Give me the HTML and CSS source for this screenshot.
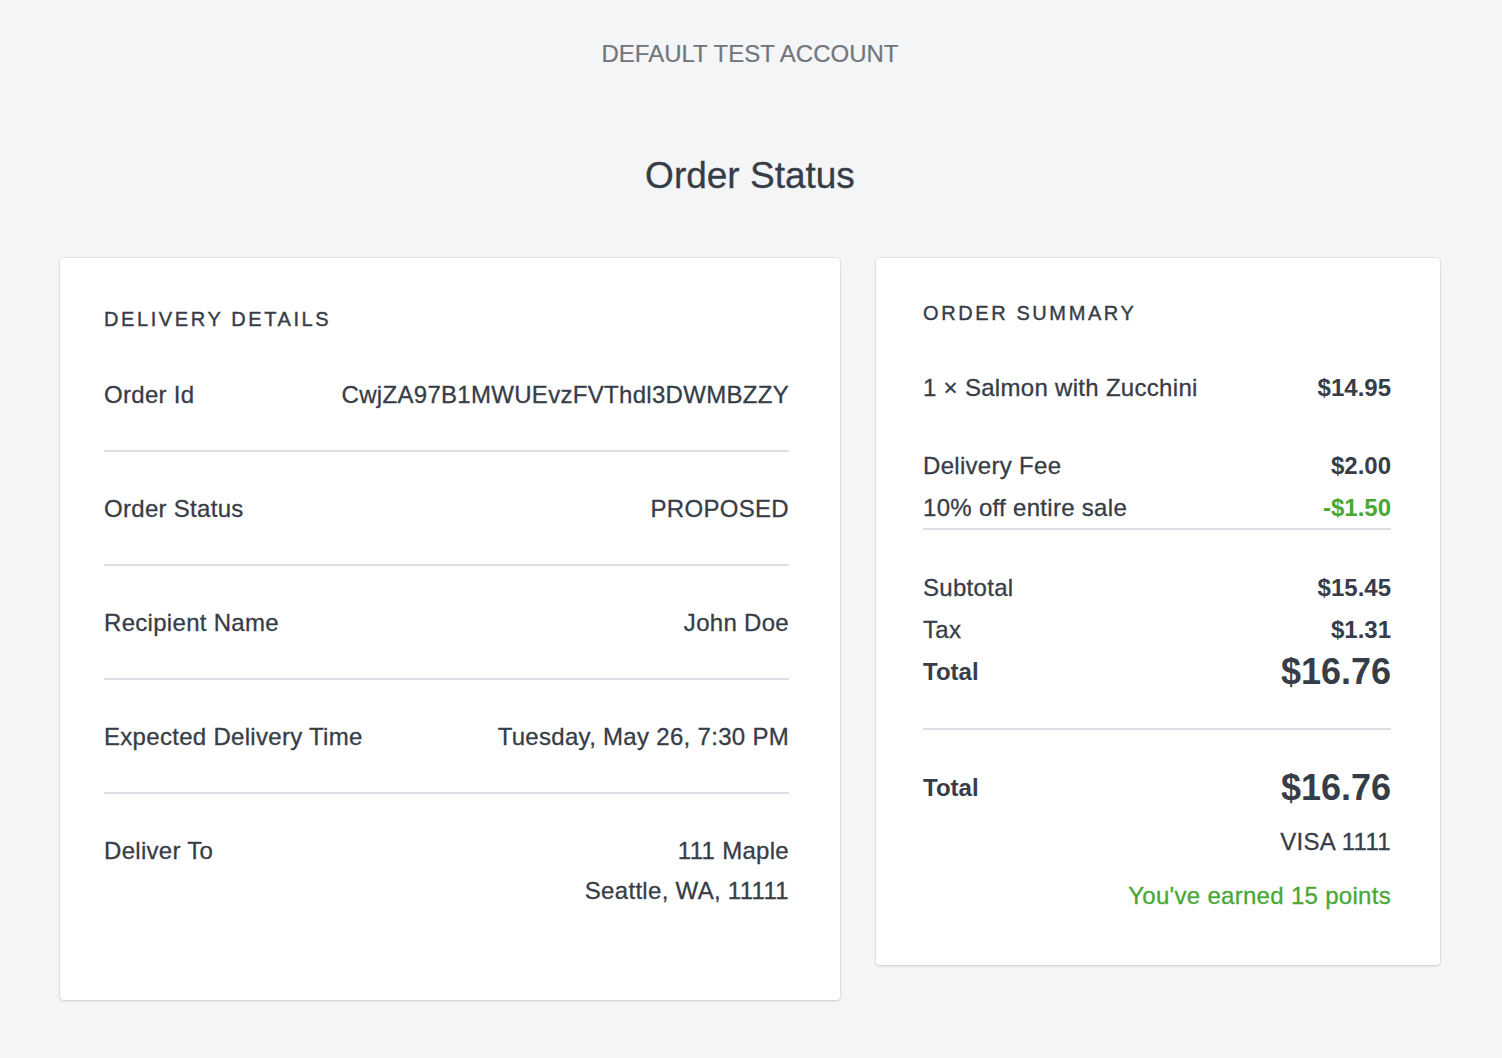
FILE: index.html
```html
<!DOCTYPE html>
<html>
<head>
<meta charset="utf-8">
<link rel="stylesheet" href="styles.css">
</head>
<body>
<header class="account">DEFAULT TEST ACCOUNT</header>
<h1 class="title">Order Status</h1>
<main class="cards">
  <section class="card delivery">
    <h2 class="card-heading">DELIVERY DETAILS</h2>
    <div class="detail-row">
      <span class="label">Order Id</span>
      <span class="value">CwjZA97B1MWUEvzFVThdl3DWMBZZY</span>
    </div>
    <div class="detail-row">
      <span class="label">Order Status</span>
      <span class="value">PROPOSED</span>
    </div>
    <div class="detail-row">
      <span class="label">Recipient Name</span>
      <span class="value">John Doe</span>
    </div>
    <div class="detail-row">
      <span class="label">Expected Delivery Time</span>
      <span class="value">Tuesday, May 26, 7:30 PM</span>
    </div>
    <div class="detail-row last">
      <span class="label">Deliver To</span>
      <span class="value address"><span>111 Maple</span><span>Seattle, WA, 11111</span></span>
    </div>
  </section>
  <section class="card summary">
    <h2 class="card-heading summary-heading">ORDER SUMMARY</h2>
    <div class="line item"><span>1 × Salmon with Zucchini</span><span class="price">$14.95</span></div>
    <div class="group fees">
      <div class="line"><span>Delivery Fee</span><span class="price">$2.00</span></div>
      <div class="line"><span>10% off entire sale</span><span class="price discount">-$1.50</span></div>
    </div>
    <div class="group totals">
      <div class="line"><span>Subtotal</span><span class="price">$15.45</span></div>
      <div class="line"><span>Tax</span><span class="price">$1.31</span></div>
      <div class="line"><span class="strong">Total</span><span class="big">$16.76</span></div>
    </div>
    <div class="group payment">
      <div class="line"><span class="strong">Total</span><span class="big">$16.76</span></div>
      <div class="pay-line">VISA 1111</div>
      <div class="pay-line points">You've earned 15 points</div>
    </div>
  </section>
</main>
</body>
</html>
```

FILE: styles.css
```css
* { box-sizing: border-box; }
html, body { margin: 0; padding: 0; }
body {
  background: #f4f5f7;
  font-family: "Liberation Sans", Arial, sans-serif;
  color: #373d47;
  padding: 40px 62px 60px 60px;
}
.account {
  text-align: center;
  font-size: 24px;
  line-height: 28px;
  color: #72757b;
  -webkit-text-stroke: 0.2px #72757b;
}
.title {
  margin: 86px 0 0;
  text-align: center;
  font-size: 37px;
  line-height: 44px;
  font-weight: 400;
  color: #373d47;
  -webkit-text-stroke: 0.3px #373d47;
}
.cards {
  margin-top: 60px;
  display: flex;
  gap: 36px;
  align-items: flex-start;
}
.card {
  background: #fff;
  border-radius: 4px;
  box-shadow: 0 0 0 1px rgba(0,0,0,0.05), 0 1px 3px rgba(0,0,0,0.12);
}
.delivery {
  flex: 0 0 780px;
  padding: 48px 51px 54px 44px;
}
.summary {
  flex: 0 0 564px;
  padding: 42px 49px 54px 47px;
}
.card-heading {
  margin: 0;
  font-size: 20px;
  line-height: 26px;
  font-weight: 400;
  letter-spacing: 2.6px;
  color: #373d47;
  -webkit-text-stroke: 0.4px #373d47;
}
.detail-row {
  display: flex;
  justify-content: space-between;
  align-items: flex-start;
  padding: 42px 0 40px;
  border-bottom: 2px solid #dcdfe3;
  font-size: 24px;
  line-height: 30px;
  letter-spacing: 0.3px;
  -webkit-text-stroke: 0.3px #373d47;
}
.delivery .card-heading { margin-bottom: 6px; }
.detail-row.last { border-bottom: none; padding-bottom: 40px; }
.value { text-align: right; }
.address { display: flex; flex-direction: column; align-items: flex-end; gap: 10px; }
.line {
  display: flex;
  justify-content: space-between;
  align-items: center;
  height: 30px;
  font-size: 24px;
  letter-spacing: 0.3px;
  -webkit-text-stroke: 0.3px #373d47;
}
.item { margin-top: 47px; }
.group { display: flex; flex-direction: column; gap: 12px; }
.fees {
  margin-top: 48px;
  padding-bottom: 5px;
  border-bottom: 2px solid #dcdfe3;
}
.totals {
  margin-top: 43px;
  padding-bottom: 41px;
  border-bottom: 2px solid #dcdfe3;
}
.payment { margin-top: 43px; gap: 24px; }
.price { font-weight: 700; -webkit-text-stroke: 0; letter-spacing: 0; }
.discount { color: #47a833; }
.strong { font-weight: 700; -webkit-text-stroke: 0; letter-spacing: 0; }
.big { font-size: 36px; font-weight: 700; line-height: 30px; -webkit-text-stroke: 0; letter-spacing: 0; }
.pay-line {
  text-align: right;
  font-size: 24px;
  line-height: 30px;
  letter-spacing: 0.3px;
  -webkit-text-stroke: 0.3px #373d47;
}
.points { color: #47a833; -webkit-text-stroke: 0.3px #47a833; }
```
